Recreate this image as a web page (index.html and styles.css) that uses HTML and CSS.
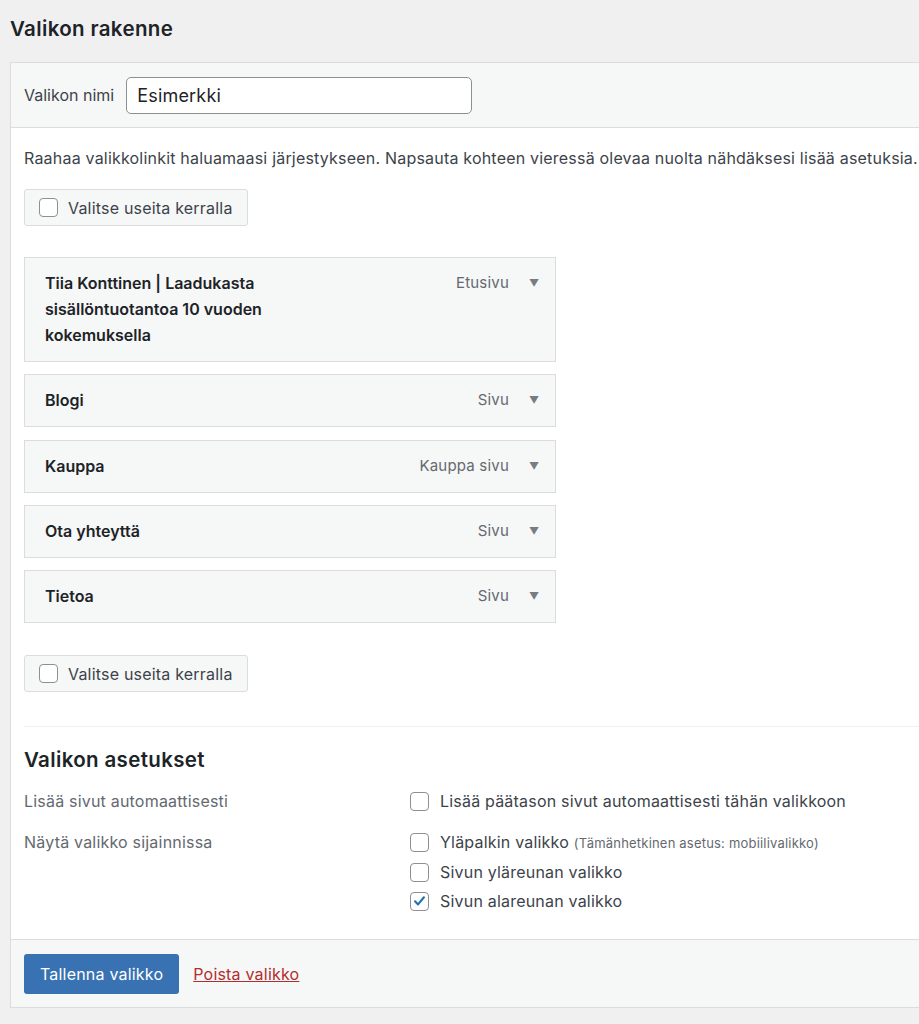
FILE: index.html
```html
<!DOCTYPE html>
<html lang="fi">
<head>
<meta charset="utf-8">
<title>Valikon rakenne</title>
<link rel="stylesheet" href="styles.css">
</head>
<body>
<div class="page">
  <h2 class="title">Valikon rakenne</h2>
  <div class="panel">
    <div class="panel-header">
      <label class="name-label" for="menu-name">Valikon nimi</label>
      <input class="name-input" id="menu-name" type="text" value="Esimerkki">
    </div>
    <div class="panel-body">
      <p class="desc">Raahaa valikkolinkit haluamaasi järjestykseen. Napsauta kohteen vieressä olevaa nuolta nähdäksesi lisää asetuksia.</p>
      <div class="bulk">
        <span class="cb"></span>
        <span>Valitse useita kerralla</span>
      </div>

      <ul class="items">
        <li class="item">
          <span class="item-title">Tiia Konttinen | Laadukasta sisällöntuotantoa 10 vuoden kokemuksella</span>
          <span class="item-type">Etusivu</span>
          <span class="arrow">&#9660;</span>
        </li>
        <li class="item">
          <span class="item-title">Blogi</span>
          <span class="item-type">Sivu</span>
          <span class="arrow">&#9660;</span>
        </li>
        <li class="item">
          <span class="item-title">Kauppa</span>
          <span class="item-type">Kauppa sivu</span>
          <span class="arrow">&#9660;</span>
        </li>
        <li class="item">
          <span class="item-title">Ota yhteyttä</span>
          <span class="item-type">Sivu</span>
          <span class="arrow">&#9660;</span>
        </li>
        <li class="item">
          <span class="item-title">Tietoa</span>
          <span class="item-type">Sivu</span>
          <span class="arrow">&#9660;</span>
        </li>
      </ul>

      <div class="bulk">
        <span class="cb"></span>
        <span>Valitse useita kerralla</span>
      </div>

      <div class="settings">
        <h3 class="settings-title">Valikon asetukset</h3>
        <div class="setting-row">
          <div class="setting-label">Lisää sivut automaattisesti</div>
          <div class="setting-opts">
            <div class="opt"><span class="cb"></span><span>Lisää päätason sivut automaattisesti tähän valikkoon</span></div>
          </div>
        </div>
        <div class="setting-row">
          <div class="setting-label">Näytä valikko sijainnissa</div>
          <div class="setting-opts locations">
            <div class="opt"><span class="cb"></span><span>Yläpalkin valikko <span class="hint">(Tämänhetkinen asetus: mobiilivalikko)</span></span></div>
            <div class="opt"><span class="cb"></span><span>Sivun yläreunan valikko</span></div>
            <div class="opt"><span class="cb checked"><svg viewBox="0 0 20 20" width="20" height="20"><path d="M4.8 10.4 L8.3 14 L15.2 5.6" fill="none" stroke="#2271b1" stroke-width="2.5" stroke-linecap="round" stroke-linejoin="round"/></svg></span><span>Sivun alareunan valikko</span></div>
          </div>
        </div>
      </div>
    </div>
    <div class="panel-footer">
      <button class="save" type="button">Tallenna valikko</button>
      <a class="delete" href="#">Poista valikko</a>
    </div>
  </div>
</div>
</body>
</html>
```

FILE: styles.css
```css
html, body {
  margin: 0;
  padding: 0;
  background: #f0f0f1;
  overflow: hidden;
}

body {
  font-family: Inter, "Noto Sans", "Liberation Sans", sans-serif;
  font-size: 16px;
  letter-spacing: 0.2px;
  color: #3c434a;
}

.page {
  padding: 16px 0 0 10px;
}

.title {
  margin: 0 0 20px;
  font-size: 20.5px;
  letter-spacing: 0.35px;
  line-height: 26px;
  font-weight: 600;
  color: #1d2327;
}

.panel {
  margin-right: -40px;
  border: 1px solid #dcdcde;
  border-right: none;
  background: #fff;
}

.panel-header {
  display: flex;
  align-items: center;
  gap: 12px;
  height: 64px;
  padding: 0 13px;
  background: #f6f7f7;
  border-bottom: 1px solid #dcdcde;
}

.name-label {
  font-size: 16px;
  letter-spacing: 0;
  color: #3c434a;
}

.name-input {
  width: 346px;
  height: 37px;
  box-sizing: border-box;
  border: 1px solid #8c8f94;
  border-radius: 5px;
  padding: 0 10px;
  font-family: inherit;
  font-size: 18px;
  letter-spacing: 0.2px;
  color: #1d2327;
  background: #fff;
}

.panel-body {
  padding: 18px 13px 26px;
}

.desc {
  margin: 0 0 19px;
  line-height: 24px;
  white-space: nowrap;
}

.bulk {
  display: inline-flex;
  align-items: center;
  gap: 10px;
  height: 37px;
  box-sizing: border-box;
  padding: 0 14px;
  border: 1px solid #dcdcde;
  border-radius: 3px;
  background: #f6f7f7;
  color: #3c434a;
}

.cb {
  flex: none;
  width: 19px;
  height: 19px;
  box-sizing: border-box;
  border: 1px solid #8c8f94;
  border-radius: 4px;
  background: #fff;
  display: inline-flex;
  align-items: center;
  justify-content: center;
}

.cb svg {
  width: 18px;
  height: 18px;
}

.items {
  list-style: none;
  margin: 31px 0 32px;
  padding: 0;
  width: 532px;
  display: flex;
  flex-direction: column;
  gap: 12.3px;
}

.item {
  display: flex;
  align-items: flex-start;
  box-sizing: border-box;
  padding: 12px 16px 13px 20px;
  border: 1px solid #dcdcde;
  background: #f6f7f7;
}

.item-title {
  flex: 1;
  max-width: 245px;
  font-weight: 600;
  letter-spacing: 0;
  line-height: 26px;
  color: #1d2327;
  margin-right: auto;
}

.item-type {
  margin-left: auto;
  line-height: 26px;
  font-size: 15px;
  color: #646970;
}

.arrow {
  width: 10px;
  margin-left: 20px;
  line-height: 26px;
  font-size: 10px;
  color: #787c82;
}

.settings {
  border-top: 1px solid #f0f0f1;
  margin-top: 34px;
  margin-right: -40px;
  padding-top: 20px;
}

.settings-title {
  margin: 0 0 16px;
  font-size: 20.5px;
  letter-spacing: 0.35px;
  line-height: 26px;
  font-weight: 600;
  color: #1d2327;
}

.setting-row {
  display: flex;
  margin-bottom: 17px;
}

.setting-row:last-child {
  margin-bottom: 0;
}

.setting-label {
  width: 386px;
  flex: none;
  line-height: 24px;
  color: #646970;
}

.setting-opts {
  display: flex;
  flex-direction: column;
  gap: 5px;
}

.opt {
  display: flex;
  align-items: center;
  gap: 11px;
  line-height: 24px;
  color: #3c434a;
}

.hint {
  font-size: 13px;
  color: #646970;
}

.panel-footer {
  display: flex;
  align-items: center;
  gap: 14px;
  height: 67px;
  padding: 0 13px;
  background: #f6f7f7;
  border-top: 1px solid #dcdcde;
}

.save {
  height: 40px;
  padding: 0 16px;
  border: none;
  border-radius: 3px;
  background: #3872b2;
  color: #fff;
  font-family: inherit;
  font-size: 16px;
  letter-spacing: 0.2px;
}

.delete {
  color: #b32d2e;
  font-size: 16px;
  text-decoration: underline;
}
```
